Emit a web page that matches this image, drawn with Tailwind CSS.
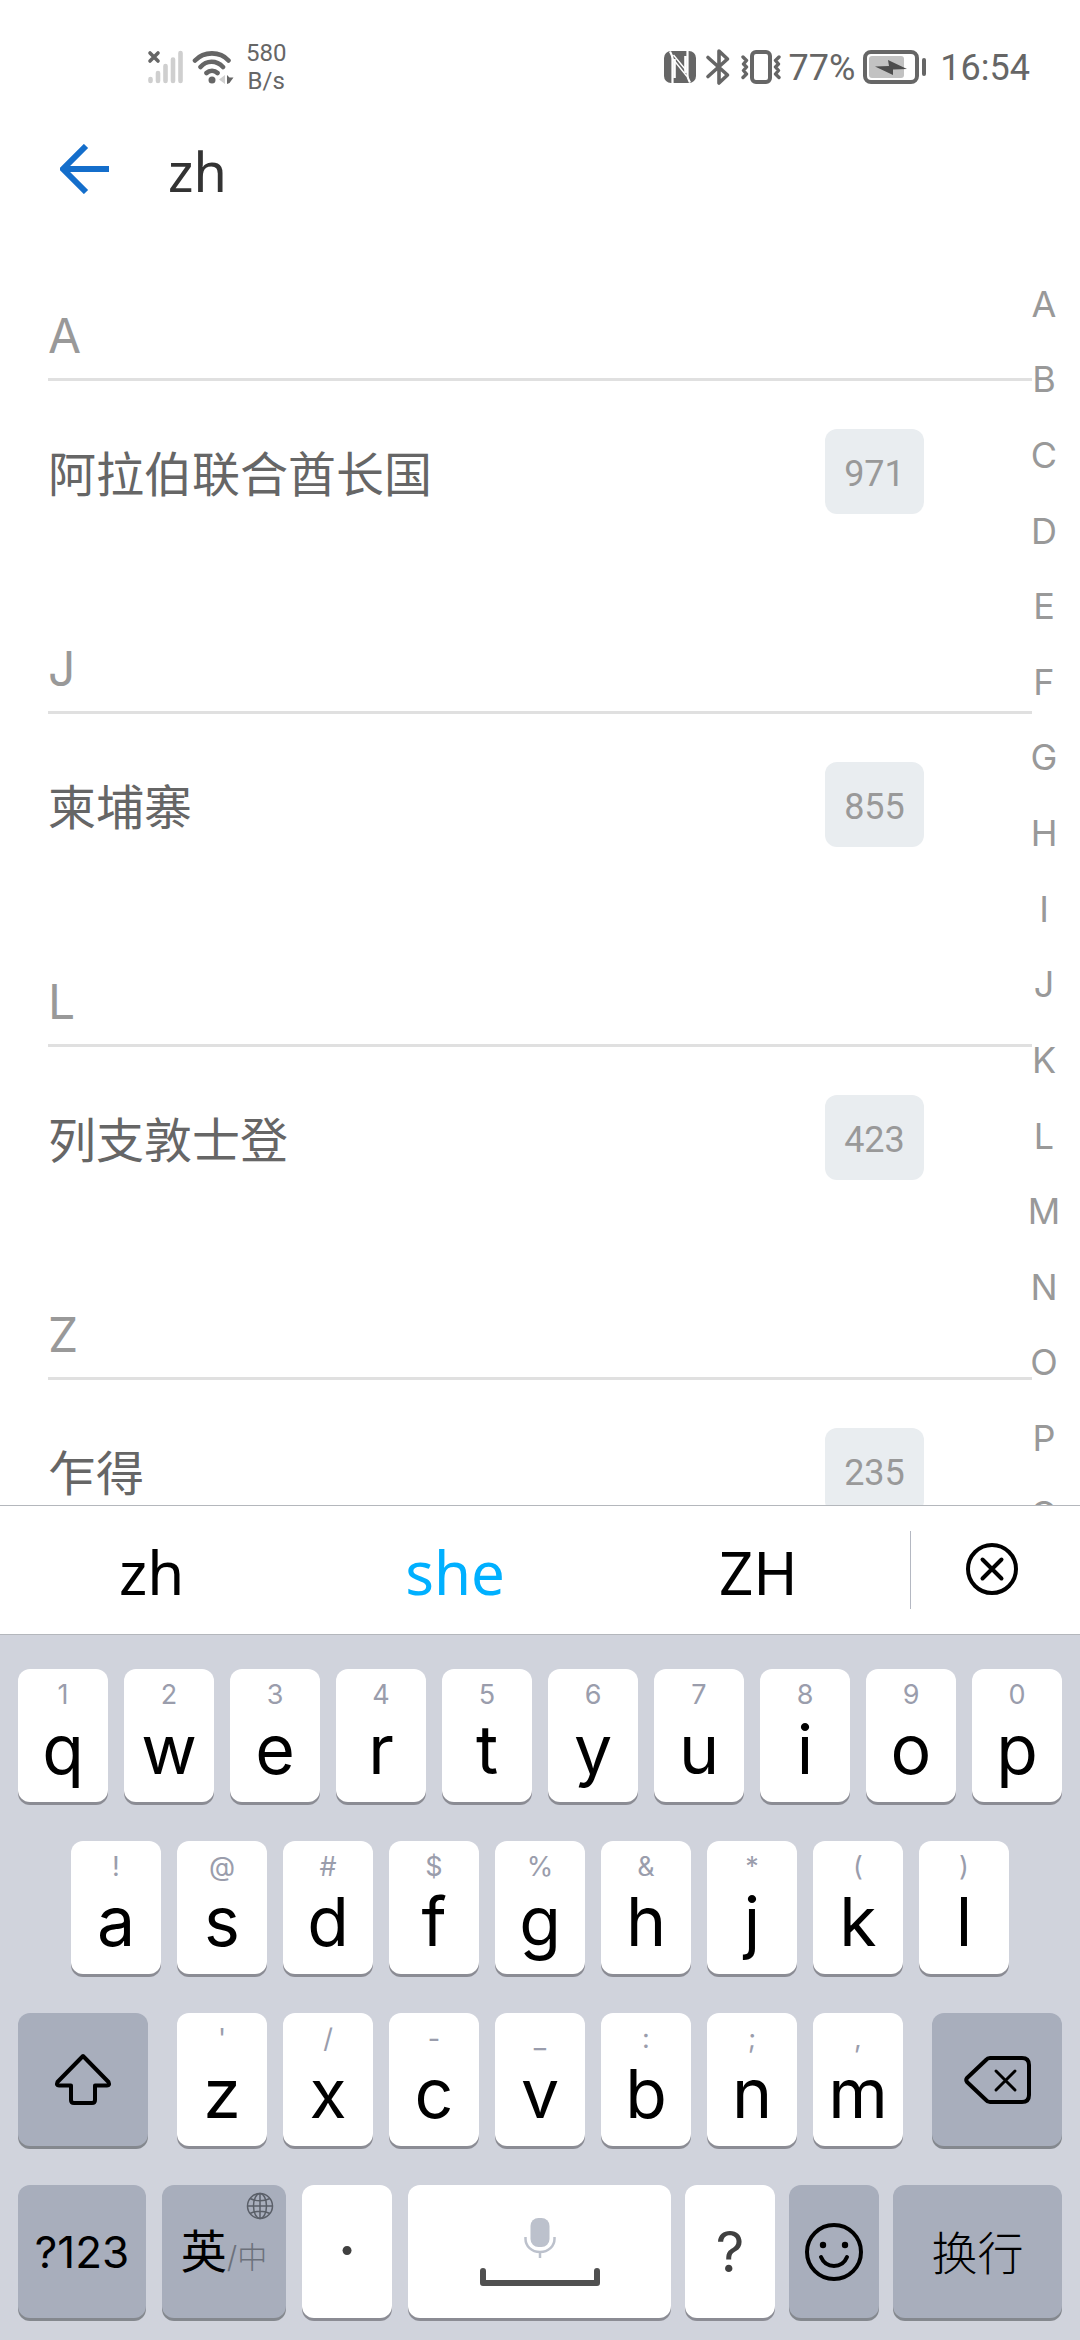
<!DOCTYPE html>
<html lang="zh-CN">
<head>
<meta charset="utf-8">
<meta name="viewport" content="width=device-width, initial-scale=1">
<title>选择国家或地区</title>
<script src="https://cdn.jsdelivr.net/npm/@tailwindcss/browser@4"></script>
</head>
<body class="flex h-screen flex-col overflow-hidden bg-white font-['Noto_Sans','Noto_Sans_CJK_SC',sans-serif]">

<!-- Status bar -->
<div class="flex h-[132px] shrink-0 items-center justify-between pt-[2px] pr-[50px] pl-[147px] text-[#666666] font-['Roboto',sans-serif]">
  <div class="flex items-center">
    <svg class="h-[36px] w-[38px]" viewBox="0 0 38 36" fill="none" stroke-linecap="round">
      <g stroke="#cfcfcf" stroke-width="4.6"><path d="M3.5 30v2M11 24v8M18.500 17v15M26 10.500v21.500M33.500 4v28"/></g>
      <path d="M3 4l8 8M11 4l-8 8" stroke="#666" stroke-width="3.600"/>
    </svg>
    <svg class="ml-[7px] h-[36px] w-[42px]" viewBox="0 0 42 36" fill="none" stroke="#666" stroke-width="4.600" stroke-linecap="round">
      <path d="M3 11.500C12 2 28 2 36.500 11.500M8.500 18c6-7 16-7 22.500 0M14.500 24c3-3 8-3 11 0"/>
      <circle cx="20" cy="31" r="3.500" fill="#666" stroke="none"/>
      <path d="M33 26v9l-6-4.500z" fill="#cfcfcf" stroke="none"/>
      <path d="M35 26v9l2.500-1 4-5.500h-4z" fill="#666" stroke="none"/>
    </svg>
    <div class="ml-[12px] text-center text-[24px] leading-[28px]">580<br>B/s</div>
  </div>
  <div class="flex items-center text-[36px] leading-[42px]">
    <svg class="h-[34px] w-[34px]" viewBox="0 0 34 34">
      <rect x="1" y="1" width="32" height="32" rx="7" fill="#666"/>
      <path d="M9.500 33V8.500c0-3-1.500-5-2.500-7M24.500 1v24.500c0 3 1.500 5 2.500 7" fill="none" stroke="#fff" stroke-width="2.200"/>
      <path d="M9.500 8.500L24 26.500M10.500 5L24.500 22" fill="none" stroke="#fff" stroke-width="1.400"/>
      <path d="M11.500 9v19M22.500 6v17" stroke="#fff" stroke-width="2.600"/>
    </svg>
    <svg class="ml-[8px] h-[38px] w-[26px]" viewBox="0 0 26 38" fill="none" stroke="#666" stroke-width="3.600" stroke-linecap="round" stroke-linejoin="round">
      <path d="M3 9.500l19.500 17.500-8.500 8V3l8.500 8L3 28.500"/>
    </svg>
    <svg class="ml-[9px] h-[36px] w-[42px]" viewBox="0 0 42 36" fill="none" stroke="#666" stroke-linecap="round" stroke-linejoin="round">
      <rect x="12" y="3" width="18" height="30" rx="4" stroke-width="4"/>
      <path d="M3 8l3.500 3.500L3.500 15 6.500 18l-3 3.500 3 3.500L3 28.500M39 8l-3.500 3.500 3 3.500-3 3 3 3.500-3 3.500 3.500 3.500" stroke-width="3.400"/>
    </svg>
    <span class="ml-[7px] pt-[2px]">77%</span>
    <svg class="ml-[8px] h-[36px] w-[64px]" viewBox="0 0 64 36">
      <rect x="2" y="3" width="52" height="30" rx="6" fill="none" stroke="#666" stroke-width="4"/>
      <rect x="6" y="7" width="35" height="22" rx="3" fill="#c2c2c2"/>
      <path d="M12 17.500l14-0.500-1-6 19 9-14 .500V26z" fill="#4d4d4d"/>
      <path d="M61 11v14" stroke="#666" stroke-width="4" stroke-linecap="round"/>
    </svg>
    <span class="ml-[13px] pt-[2px]">16:54</span>
  </div>
</div>

<!-- Search header -->
<header class="flex h-[76px] shrink-0 items-center px-[48px]">
  <button aria-label="返回" class="flex h-[72px] w-[72px] items-center justify-start pb-[2px] pl-[12px]">
    <svg class="h-[50px] w-[50px] shrink-0" viewBox="0 0 50 50" fill="none" stroke="#146ecb" stroke-width="6"><path d="M26 2L3 25l23 23M4 25h45"/></svg>
  </button>
  <input aria-label="搜索" value="zh" class="ml-[48px] min-w-0 flex-1 pt-[2px] text-[54px] leading-[74px] text-[#333333] outline-none">
</header>

<!-- Country list with letter index -->
<main class="flex min-h-0 flex-1 overflow-hidden pt-[20px] pl-[48px]">
  <div id="list" class="flex-1"></div>
  <nav id="index" aria-label="字母索引" class="mt-[38px] mr-[24px] flex h-[1966px] w-[24px] shrink-0 flex-col items-center text-[36px] leading-[42px] text-[#999999] font-['Inter',sans-serif]"></nav>
</main>

<!-- Suggestions -->
<div class="flex h-[130px] shrink-0 items-center border-y border-[#b4b7bc] bg-white text-[60px] leading-[80px] text-black">
  <button class="flex-1 pt-[4px]">zh</button>
  <button class="flex-1 pt-[4px] text-[#00b0ff]">she</button>
  <button class="flex-1 pt-[4px]">ZH</button>
  <span class="h-[78px] w-px bg-[#b4b8c2]"></span>
  <button aria-label="清除" class="flex w-[169px] justify-center pr-[6px] pb-[2px]">
    <svg class="h-[56px] w-[56px]" viewBox="0 0 56 56" fill="none" stroke="#000" stroke-width="4" stroke-linecap="round"><circle cx="28" cy="28" r="24"/><path d="M18.500 18.500l19 19M37.500 18.500l-19 19"/></svg>
  </button>
</div>

<!-- Keyboard -->
<section aria-label="键盘" class="flex shrink-0 flex-col gap-[39px] bg-[#d0d3dc] px-[18px] pt-[34px] pb-[22px] text-black font-['Inter','Noto_Sans_CJK_SC',sans-serif]">
  <div id="row1" class="flex gap-[16px]"></div>
  <div id="row2" class="flex gap-[16px] px-[53px]"></div>
  <div class="flex gap-[16px]">
    <button aria-label="大写" class="mr-[13px] flex h-[133px] min-w-0 flex-[130] items-center justify-center rounded-[12px] bg-[#a8aebc] shadow-[0_3px_0_#84888e]">
      <svg class="h-[54px] w-[60px]" viewBox="0 0 60 54" fill="none" stroke="#000" stroke-width="4" stroke-linejoin="round"><path d="M30 3L4.500 29q-1.500 3.500 1.500 3.500h12V47q0 3 3 3h18q3 0 3-3V32.500h12q3 0 1.500-3.500z"/></svg>
    </button>
    <div id="row3" class="flex min-w-0 flex-[726] gap-[16px]"></div>
    <button aria-label="退格" class="ml-[13px] flex h-[133px] min-w-0 flex-[130] items-center justify-center rounded-[12px] bg-[#a8aebc] shadow-[0_3px_0_#84888e]">
      <svg class="h-[52px] w-[70px]" viewBox="0 0 70 52" fill="none" stroke="#000" stroke-width="4" stroke-linecap="round" stroke-linejoin="round"><path d="M28 4h32q7 0 7 7v30q0 7-7 7H28q-2.500 0-4-2L5 28q-1.500-2 0-4L24 6q1.500-2 4-2z"/><path d="M34 17l19 19M53 17L34 36" stroke-width="3"/></svg>
    </button>
  </div>
  <div class="flex gap-[16px]">
    <button class="flex h-[133px] min-w-0 flex-[128] items-center justify-center rounded-[12px] bg-[#a8aebc] text-[44px] leading-[54px] shadow-[0_3px_0_#84888e]">?123</button>
    <button class="relative flex h-[133px] min-w-0 flex-[124] items-center justify-center rounded-[12px] bg-[#a8aebc] pt-[4px] text-[46px] leading-[54px] shadow-[0_3px_0_#84888e]">
      <span class="whitespace-nowrap">英<span class="text-[30px] font-light text-[#6c717b]">/中</span></span>
      <svg class="absolute top-[7px] right-[12px] h-[28px] w-[28px]" viewBox="0 0 28 28" fill="none" stroke="#5a5f68" stroke-width="1.500"><circle cx="14" cy="14" r="12.500"/><ellipse cx="14" cy="14" rx="6.500" ry="12.500"/><path d="M14 1.500v25M1.500 14h25M4 6.500q10 4.500 20 0M4 21.500q10-4.500 20 0"/></svg>
    </button>
    <button class="flex h-[133px] min-w-0 flex-[90] items-center justify-center rounded-[12px] bg-white pb-[6px] text-[68px] leading-[76px] text-[#404040] shadow-[0_3px_0_#8b8c94]">·</button>
    <div class="flex min-w-0 flex-[654] gap-[14px]">
      <button aria-label="空格" class="flex h-[133px] min-w-0 flex-[263] flex-col items-center rounded-[12px] bg-white pt-[32px] shadow-[0_3px_0_#8b8c94]">
        <svg class="h-[44px] w-[32px]" viewBox="0 0 32 44" fill="none"><rect x="6.500" y="1" width="19" height="29" rx="8" fill="#bcc1cc"/><path d="M1.500 20v2c0 7 6 13 14.500 13s14.500-6 14.500-13v-2M16 35v6" stroke="#bcc1cc" stroke-width="2.500"/></svg>
        <svg class="mt-[6px] h-[20px] w-[122px]" viewBox="0 0 122 20" fill="none" stroke="#505050" stroke-width="6" stroke-linecap="round" stroke-linejoin="round"><path d="M4 4v12h114V4"/></svg>
      </button>
      <button class="flex h-[133px] min-w-0 flex-[90] items-center justify-center rounded-[12px] bg-white text-[56px] leading-[72px] text-[#404040] shadow-[0_3px_0_#8b8c94]">?</button>
      <button aria-label="表情" class="flex h-[133px] min-w-0 flex-[90] items-center justify-center rounded-[12px] bg-[#a8aebc] shadow-[0_3px_0_#84888e]">
        <svg class="h-[60px] w-[60px]" viewBox="0 0 60 60" fill="none" stroke="#000" stroke-width="4" stroke-linecap="round"><circle cx="30" cy="30" r="27"/><path d="M17 35c5 12 21 12 26 0"/><g fill="#000" stroke="none"><circle cx="19" cy="23" r="3.200"/><circle cx="41" cy="23" r="3.200"/></g></svg>
      </button>
      <button class="flex h-[133px] min-w-0 flex-[169] items-center justify-center rounded-[12px] bg-[#a8aebc] pt-[2px] text-[46px] leading-[54px] font-light shadow-[0_3px_0_#84888e]">换行</button>
    </div>
  </div>
</section>

<script>
  const countries = [
    ['A', '阿拉伯联合酋长国', '971'],
    ['J', '柬埔寨', '855'],
    ['L', '列支敦士登', '423'],
    ['Z', '乍得', '235'],
  ];
  document.getElementById('list').innerHTML = countries.map(([letter, name, code]) => `
    <section>
      <h2 class="flex h-[153px] items-end border-b-3 border-[#e0e0e0] pb-[12px] text-[48px] leading-[60px] text-[#999999] font-['Inter',sans-serif]">${letter}</h2>
      <div class="flex h-[180px] items-center justify-between pr-[108px] text-[48px] leading-[72px] text-[#666666]">
        <span class="pt-[5px]">${name}</span>
        <span class="flex h-[85px] w-[99px] items-center justify-center rounded-[12px] bg-[#e9edf0] pt-[6px] text-[36px] leading-[42px] text-[#999999] font-['Roboto',sans-serif]">${code}</span>
      </div>
    </section>`).join('');

  document.getElementById('index').innerHTML = [...'ABCDEFGHIJKLMNOPQRSTUVWXYZ'].map(c =>
    `<a href="#" class="flex flex-1 items-center">${c}</a>`).join('');

  const fillRow = (id, letters, hints) => {
    document.getElementById(id).innerHTML = [...letters].map((c, i) => `
      <button class="flex h-[133px] min-w-0 flex-1 flex-col items-center rounded-[12px] bg-white pt-[10px] shadow-[0_3px_0_#8b8c94]">
        <span class="text-[27px] leading-[32px] text-[#9a9dac]">${hints[i].replace('&', '&amp;')}</span>
        <span class="text-[68px] leading-[76px]">${c}</span>
      </button>`).join('');
  };
  fillRow('row1', 'qwertyuiop', [...'1234567890']);
  fillRow('row2', 'asdfghjkl', [...'!@#$%&*()']);
  fillRow('row3', 'zxcvbnm', [..."'/-_:;,"]);
</script>
</body>
</html>
